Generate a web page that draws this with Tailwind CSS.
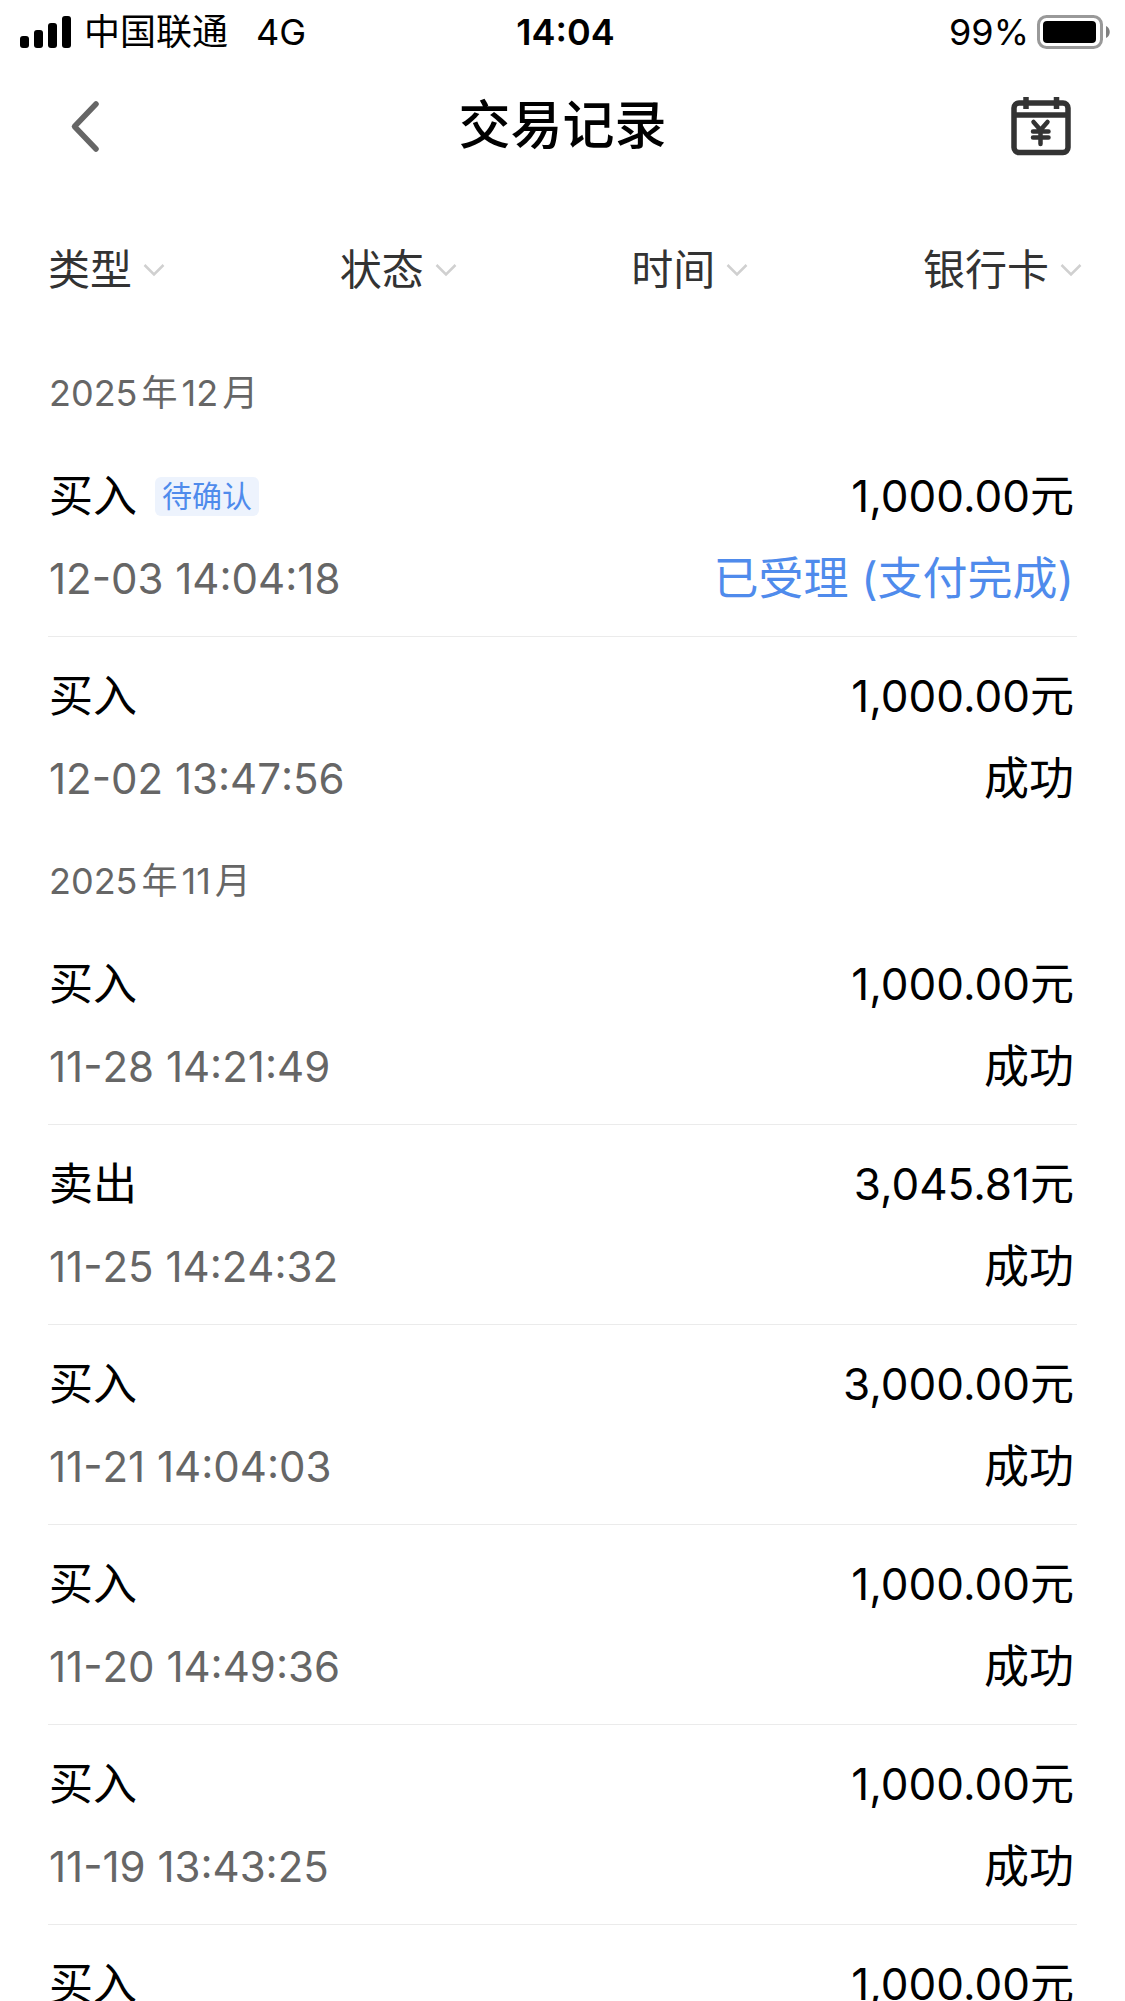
<!DOCTYPE html>
<html lang="zh-CN">
<head>
    <meta charset="UTF-8">
    <meta name="viewport" content="width=device-width, initial-scale=1.0">
    <script src="https://cdn.jsdelivr.net/npm/@tailwindcss/browser@4"></script>
    <title>交易记录</title>
</head>

<body class="bg-white text-black font-[Inter,'Noto_Sans_CJK_SC',sans-serif]">
    <div class="h-screen overflow-hidden">
        <!-- 状态栏 -->
        <div class="grid grid-cols-3 items-center pt-1 pl-5 pr-[14px] text-[36px] leading-[56px]">
            <div class="flex items-center">
                <svg class="w-[52px] h-8 mr-3" viewBox="0 0 52 32" aria-hidden="true">
                    <rect x="0" y="20" width="9" height="12" rx="3" />
                    <rect x="14" y="14" width="9" height="18" rx="3" />
                    <rect x="28" y="7" width="9" height="25" rx="3" />
                    <rect x="42" y="0" width="9" height="32" rx="3" />
                </svg>
                <span>中国联通</span>
                <span class="ml-7">4G</span>
            </div>
            <div class="text-center font-semibold">14:04</div>
            <div class="flex items-center justify-end gap-2">
                <span>99%</span>
                <svg class="w-[74px] h-[34px]" viewBox="0 0 74 34" aria-hidden="true">
                    <rect x="1.5" y="1.5" width="63" height="31" rx="8" fill="none" stroke="#999" stroke-width="3" />
                    <rect x="6" y="6" width="53" height="22" rx="4" />
                    <path d="M69 11c5 2 5 10 0 12z" fill="#808080" />
                </svg>
            </div>
        </div>

        <!-- 标题栏 -->
        <header class="flex items-center justify-between px-[54px] pt-[34px] pb-8">
            <button type="button" aria-label="返回" class="w-[60px]">
                <svg class="w-[60px] h-[60px]" viewBox="0 0 60 60" fill="none" stroke="#666" stroke-width="5.5" stroke-linecap="round" stroke-linejoin="round">
                    <path d="M42 8L20.500 30.500L42 53" />
                </svg>
            </button>
            <h1 class="text-[52px] leading-[64px] font-medium">交易记录</h1>
            <button type="button" aria-label="交易日历">
                <svg class="w-[60px] h-[60px]" viewBox="0 0 60 60" fill="none" stroke="#333" stroke-width="5.5" stroke-linecap="butt">
                    <rect x="3" y="7" width="54" height="49.500" rx="5" />
                    <path d="M4 19H56" />
                    <path d="M15 1V13M45.500 1V13" />
                    <path d="M22.500 26L29.500 34L36.500 26M29.500 34V48M22 35.500H37.500M22 41.500H37.500" stroke-width="4.500" stroke-linecap="round" stroke-linejoin="round" />
                </svg>
            </button>
        </header>

        <!-- 筛选 -->
        <form class="flex justify-between pl-12 pr-[43px] pt-[50px] pb-[49px] text-[42px] leading-[60px] text-[#333]">
            <label class="flex items-center gap-[10px]">
                <select aria-label="类型" class="appearance-none">
                    <option>类型</option>
                </select>
                <svg class="w-[22px] h-[14px]" viewBox="0 0 22 14" fill="none" stroke="#d0d0d0" stroke-width="2.500"><path d="M1.500 2L11 11.500L20.500 2" /></svg>
            </label>
            <label class="flex items-center gap-[10px]">
                <select aria-label="状态" class="appearance-none">
                    <option>状态</option>
                </select>
                <svg class="w-[22px] h-[14px]" viewBox="0 0 22 14" fill="none" stroke="#d0d0d0" stroke-width="2.500"><path d="M1.500 2L11 11.500L20.500 2" /></svg>
            </label>
            <label class="flex items-center gap-[10px]">
                <select aria-label="时间" class="appearance-none">
                    <option>时间</option>
                </select>
                <svg class="w-[22px] h-[14px]" viewBox="0 0 22 14" fill="none" stroke="#d0d0d0" stroke-width="2.500"><path d="M1.500 2L11 11.500L20.500 2" /></svg>
            </label>
            <label class="flex items-center gap-[10px]">
                <select aria-label="银行卡" class="appearance-none">
                    <option>银行卡</option>
                </select>
                <svg class="w-[22px] h-[14px]" viewBox="0 0 22 14" fill="none" stroke="#d0d0d0" stroke-width="2.500"><path d="M1.500 2L11 11.500L20.500 2" /></svg>
            </label>
        </form>

        <!-- 交易列表 -->
        <main class="px-12 text-[44px] leading-[60px]">
            <section>
                <h2 class="py-[14px] pl-px text-[36px] text-[#666]">2025<span class="mx-1">年</span>12<span class="ml-1">月</span></h2>
                <ul>
                    <li class="pt-[29px] pb-[27px] border-b border-[#ebebeb]">
                        <div class="flex justify-between pl-px pr-[3px]">
                            <div class="flex items-center gap-[18px]">
                                <span>买入</span>
                                <span class="rounded-md bg-[#edf3fd] px-[7px] text-[30px] leading-[39px] text-[#4f8bec]">待确认</span>
                            </div>
                            <span>1,000.00元</span>
                        </div>
                        <div class="flex justify-between mt-[23px] pl-px pr-[3px]">
                            <time class="text-[42px] text-[#666] [font-kerning:none]">12-03 14:04:18</time>
                            <span class="text-[45px] text-[#4f8bec]">已受理 (支付完成)</span>
                        </div>
                    </li>
                    <li class="pt-[29px] pb-7">
                        <div class="flex justify-between pl-px pr-[3px]">
                            <span>买入</span>
                            <span>1,000.00元</span>
                        </div>
                        <div class="flex justify-between mt-[23px] pl-px pr-[3px]">
                            <time class="text-[42px] text-[#666] [font-kerning:none]">12-02 13:47:56</time>
                            <span class="text-[45px]">成功</span>
                        </div>
                    </li>
                </ul>
            </section>

            <section>
                <h2 class="py-[14px] pl-px text-[36px] text-[#666]">2025<span class="mx-1">年</span>11<span class="ml-1">月</span></h2>
                <ul>
                    <li class="pt-[29px] pb-[27px] border-b border-[#ebebeb]">
                        <div class="flex justify-between pl-px pr-[3px]">
                            <span>买入</span>
                            <span>1,000.00元</span>
                        </div>
                        <div class="flex justify-between mt-[23px] pl-px pr-[3px]">
                            <time class="text-[42px] text-[#666] [font-kerning:none]">11-28 14:21:49</time>
                            <span class="text-[45px]">成功</span>
                        </div>
                    </li>
                    <li class="pt-[29px] pb-[27px] border-b border-[#ebebeb]">
                        <div class="flex justify-between pl-px pr-[3px]">
                            <span>卖出</span>
                            <span>3,045.81元</span>
                        </div>
                        <div class="flex justify-between mt-[23px] pl-px pr-[3px]">
                            <time class="text-[42px] text-[#666] [font-kerning:none]">11-25 14:24:32</time>
                            <span class="text-[45px]">成功</span>
                        </div>
                    </li>
                    <li class="pt-[29px] pb-[27px] border-b border-[#ebebeb]">
                        <div class="flex justify-between pl-px pr-[3px]">
                            <span>买入</span>
                            <span>3,000.00元</span>
                        </div>
                        <div class="flex justify-between mt-[23px] pl-px pr-[3px]">
                            <time class="text-[42px] text-[#666] [font-kerning:none]">11-21 14:04:03</time>
                            <span class="text-[45px]">成功</span>
                        </div>
                    </li>
                    <li class="pt-[29px] pb-[27px] border-b border-[#ebebeb]">
                        <div class="flex justify-between pl-px pr-[3px]">
                            <span>买入</span>
                            <span>1,000.00元</span>
                        </div>
                        <div class="flex justify-between mt-[23px] pl-px pr-[3px]">
                            <time class="text-[42px] text-[#666] [font-kerning:none]">11-20 14:49:36</time>
                            <span class="text-[45px]">成功</span>
                        </div>
                    </li>
                    <li class="pt-[29px] pb-[27px] border-b border-[#ebebeb]">
                        <div class="flex justify-between pl-px pr-[3px]">
                            <span>买入</span>
                            <span>1,000.00元</span>
                        </div>
                        <div class="flex justify-between mt-[23px] pl-px pr-[3px]">
                            <time class="text-[42px] text-[#666] [font-kerning:none]">11-19 13:43:25</time>
                            <span class="text-[45px]">成功</span>
                        </div>
                    </li>
                    <li class="pt-[29px] pb-[27px]">
                        <div class="flex justify-between pl-px pr-[3px]">
                            <span>买入</span>
                            <span>1,000.00元</span>
                        </div>
                    </li>
                </ul>
            </section>
        </main>
    </div>
</body>

</html>
